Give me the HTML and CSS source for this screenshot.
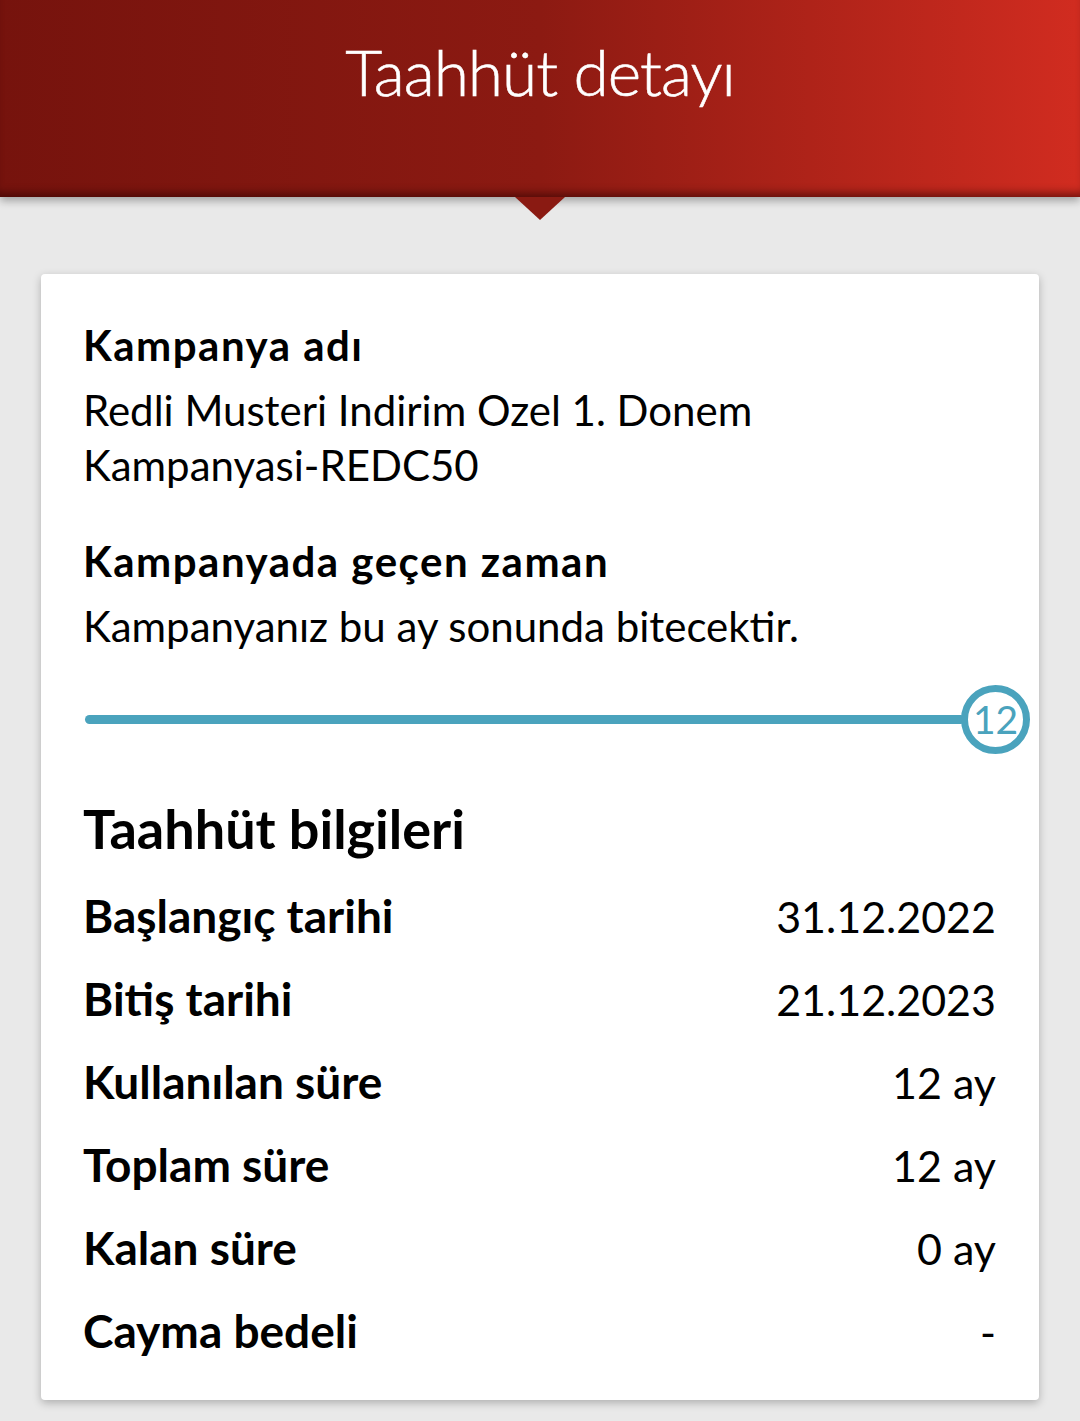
FILE: index.html
```html
<!DOCTYPE html>
<html lang="tr">
<head>
    <meta charset="UTF-8">
    <meta name="viewport" content="width=device-width, initial-scale=1.0">
    <title>Taahhüt detayı</title>
    <link rel="stylesheet" href="styles.css">
</head>
<body>
    <!-- üst başlık -->
    <header class="top-bar">
        <h1>Taahhüt detayı</h1>
    </header>

    <div class="page">
        <div class="card">
            <section class="block">
                <h2>Kampanya adı</h2>
                <p>Redli Musteri Indirim Ozel 1. Donem<br>Kampanyasi-REDC50</p>
            </section>

            <section class="block">
                <h2>Kampanyada geçen zaman</h2>
                <p>Kampanyanız bu ay sonunda bitecektir.</p>
            </section>

            <div class="progress">
                <div class="track"></div>
                <div class="knob">12</div>
            </div>

            <h3 class="info-title">Taahhüt bilgileri</h3>
            <ul class="info-list">
                <li><span class="label">Başlangıç tarihi</span><span class="value">31.12.2022</span></li>
                <li><span class="label">Bitiş tarihi</span><span class="value">21.12.2023</span></li>
                <li><span class="label">Kullanılan süre</span><span class="value">12 ay</span></li>
                <li><span class="label">Toplam süre</span><span class="value">12 ay</span></li>
                <li><span class="label">Kalan süre</span><span class="value">0 ay</span></li>
                <li><span class="label">Cayma bedeli</span><span class="value">-</span></li>
            </ul>
        </div>
    </div>
</body>
</html>
```

FILE: styles.css
```css
html, body {
  margin: 0;
  padding: 0;
}
body {
  background: #e9e9e9;
  font-family: Lato, "Liberation Sans", sans-serif;
  color: #000;
  height: 1421px;
  overflow: hidden;
}
h1, h2, h3, p, ul, li {
  margin: 0;
  padding: 0;
  list-style: none;
}

.top-bar {
  position: relative;
  height: 197px;
  background: linear-gradient(to right, #76130d 0%, #8c1a12 50%, #d12c20 100%);
  box-shadow: inset 0 -9px 8px -5px rgba(40, 0, 0, 0.55), 0 4px 8px rgba(0, 0, 0, 0.3);
  text-align: center;
}
.top-bar::after {
  content: "";
  position: absolute;
  left: 515px;
  bottom: -23px;
  border-left: 25px solid transparent;
  border-right: 25px solid transparent;
  border-top: 23px solid #8a1a12;
}
.top-bar h1 {
  color: #fff;
  font-weight: 300;
  font-size: 64px;
  line-height: 144px;
  letter-spacing: -1px;
  -webkit-text-stroke: 0.6px #fff;
}

.page {
  padding: 77px 41px 0;
}
.card {
  background: #fff;
  border-radius: 4px;
  box-shadow: 0 3px 8px rgba(0, 0, 0, 0.25);
  padding: 43px 43px 26px 42px;
  height: 1126px;
  box-sizing: border-box;
}

.block h2 {
  font-size: 42px;
  font-weight: 700;
  line-height: 56px;
  letter-spacing: 1.5px;
}
.block p {
  font-size: 42px;
  line-height: 55px;
  margin-top: 10px;
}
.block + .block {
  margin-top: 40px;
}

.progress {
  display: flex;
  align-items: center;
  margin-top: 31px;
  margin-right: -34px;
}
.track {
  flex: 1;
  height: 9px;
  border-radius: 5px;
  background: #4aa3bd;
  margin-left: 2px;
}
.knob {
  width: 55px;
  height: 55px;
  border: 7px solid #4aa3bd;
  border-radius: 50%;
  color: #4aa3bd;
  font-size: 39px;
  line-height: 55px;
  text-align: center;
  margin-left: -4px;
}

.info-title {
  font-size: 54px;
  font-weight: 700;
  line-height: 60px;
  margin-top: 45px;
}
.info-list {
  margin-top: 15px;
}
.info-list li {
  display: flex;
  justify-content: space-between;
  align-items: baseline;
  height: 83px;
  line-height: 83px;
}
.label {
  font-size: 46px;
  font-weight: 700;
}
.value {
  font-size: 43px;
}
```
